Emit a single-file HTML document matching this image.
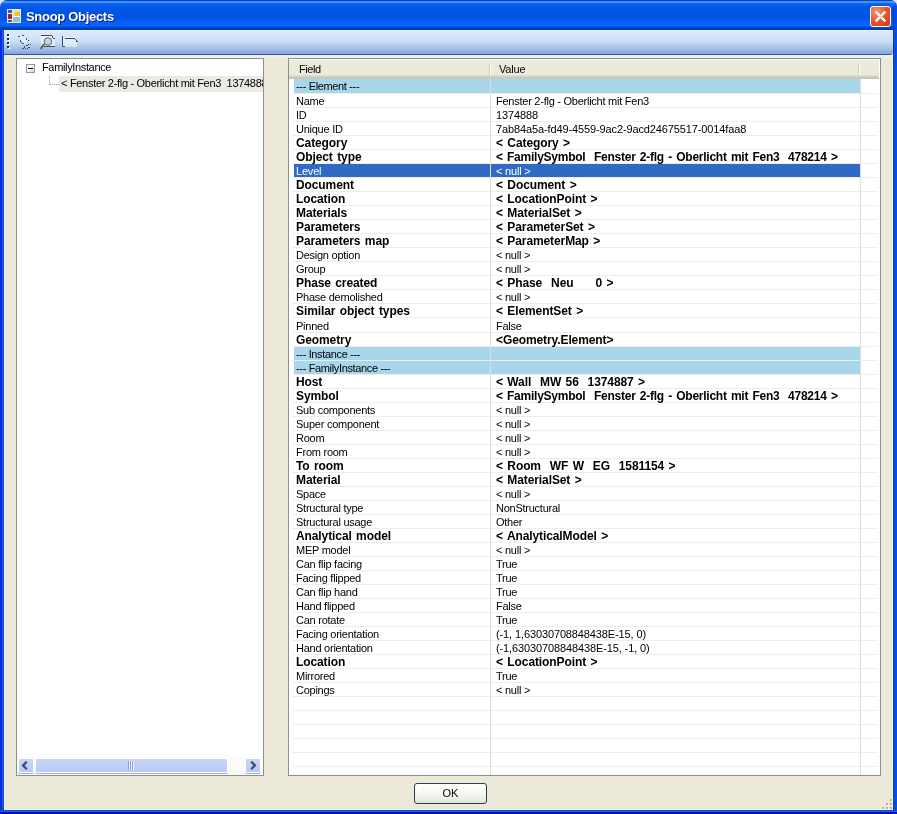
<!DOCTYPE html>
<html><head><meta charset="utf-8">
<style>
*{margin:0;padding:0;box-sizing:border-box}
html,body{width:897px;height:814px;overflow:hidden;background:#ECE9D8}
body{position:relative;-webkit-font-smoothing:antialiased;font-family:"Liberation Sans",sans-serif;font-size:11px;color:#000}
.a{position:absolute}
/* frame */
#title{left:0;top:0;width:897px;height:30px;border-radius:7px 6px 0 0;
 background:linear-gradient(to bottom,#0A3FD0 0px,#0A3FD0 1px,#3A92FF 1px,#3A92FF 3px,#1770F2 3px,#0862EC 4px,#0058E8 7px,#0054E3 12px,#0055E6 19px,#0A61FB 22px,#0C60F8 26px,#0050DA 27px,#0042C4 28px,#003AB2 30px)}
#lf{left:0;top:30px;width:4px;height:784px;background:linear-gradient(to right,#0A2ED4 0,#0A2ED4 2px,#1A5CF0 2px,#1A5CF0 3px,#0B4BD8 3px)}
#rf{left:893px;top:6px;width:4px;height:808px;background:linear-gradient(to right,#0D3CB8 0,#0D3CB8 1px,#0A4AE0 1px,#0A4AE0 3px,#0050F0 3px)}
#bf{left:0;top:810px;width:897px;height:4px;background:linear-gradient(to bottom,#0D4DC6 0,#0D4DC6 1px,#1F5FEA 1px,#1F5FEA 2px,#0010A0 2px)}
#hl{left:4px;top:55px;width:1px;height:755px;background:#F2F2FF}
#hr{left:892px;top:55px;width:1px;height:755px;background:#F2F8F8}
#hb{left:4px;top:809px;width:889px;height:1px;background:#E6FAFA}
#ttext{will-change:transform;left:26px;top:9px;font-weight:bold;font-size:13px;color:#fff;letter-spacing:-0.3px;text-shadow:1px 1px 0 #0A1E80;white-space:pre;line-height:16px}
#close{left:870px;top:6px;width:21px;height:21px;border:1px solid #fff;border-radius:3px;
 background:radial-gradient(circle at 30% 25%,#F29A7C 0,#E45A34 45%,#CC3A12 100%)}
/* toolbar */
#tb{left:4px;top:30px;width:889px;height:25px;
 background:linear-gradient(to bottom,#E3F5FF 0,#E3F5FF 1px,#DCE8FA 1px,#D8E6FA 6px,#C5DDF8 12px,#B0CCE6 16px,#A6C4E4 18px,#98B2EE 21px,#8FA5E0 23px,#8FA5E0 24px,#3B5577 24px,#3B5577 25px);
 border-radius:0 0 3px 0}
.dot{width:2px;height:2px;background:#1F2D50;box-shadow:1px 1px 0 #fff}
/* panels */
#tree{left:16px;top:58px;width:248px;height:718px;border:1px solid #8C8E96;background:#fff}
#grid{left:288px;top:58px;width:593px;height:718px;border:1px solid #8C8E96;background:#fff;overflow:hidden}
.t{white-space:pre;line-height:13px;will-change:transform}
/* grid */
#hdr{left:289px;top:59px;width:590px;height:20px;
 background:linear-gradient(to bottom,#FFFFFF 0,#FFFFFF 1px,#EBEADB 1px,#EBEADB 16px,#E2DECD 16px,#E2DECD 17px,#D6D2C2 17px,#D6D2C2 18px,#CBC7B8 18px,#CBC7B8 20px)}
.hdiv{top:63px;width:1px;height:12px;background:#CFCBBB;box-shadow:1px 0 0 #fff}
.gl{position:absolute;left:292px;width:586px;height:1px;background:#EDEDEA}
.vl{position:absolute;top:79px;width:1px;height:696px;background:#DEDEDA}
.row{position:absolute;will-change:transform;left:294px;width:566px;white-space:pre}
.row span{position:absolute;top:1px;line-height:13px}
.c1{left:2px}
.c2{left:202px}
.sec{background:#A8D6EA}
.sel{background:#316AC5;color:#fff}
.rr span{font-size:11px;letter-spacing:-0.25px}
.sec span{letter-spacing:-0.35px}
.sel span{letter-spacing:-0.2px}
.bb span{font-weight:bold;font-size:12px;letter-spacing:-0.1px;word-spacing:1.2px}
/* scrollbar */
#sb{left:17px;top:757px;width:246px;height:18px;background:#FBFCF8}
.sbtn{top:759px;width:16px;height:15px;border-radius:2px;border:1px solid #FFFFFF;
 background:linear-gradient(to bottom,#C8D6FB 0,#B7C8F5 100%)}
#thumb{left:35px;top:759px;width:192px;height:15px;border:1px solid #fff;border-radius:2px;
 background:linear-gradient(to right,#C4D4FC 0,#B8CBF8 100%);box-shadow:inset -1px -1px 0 #A8BCE8}
/* ok */
#ok{will-change:transform;left:414px;top:783px;width:73px;height:21px;border:1px solid #2A3E5C;border-radius:3px;
 background:linear-gradient(to bottom,#FFFFFF 0,#F4F4F0 60%,#E6E4D8 100%);text-align:center;line-height:18px}
.grip{width:2px;height:2px;background:#B3B1A4;box-shadow:1px 1px 0 #fff}
</style></head><body>
<div class="a" style="left:0;top:0;width:897px;height:8px;background:#E4E6F4"></div>
<div class="a" id="title"></div>
<!-- app icon -->
<div class="a" style="left:7px;top:9px;width:14px;height:14px;background:#F4F8FF;border:1px solid #E0E8FF"></div>
<div class="a" style="left:8px;top:10px;width:4px;height:3px;background:#2A6A9A"></div>
<div class="a" style="left:8px;top:14px;width:4px;height:5px;background:#B82020"></div>
<div class="a" style="left:13px;top:10px;width:7px;height:6px;background:#E8C030;box-shadow:inset 2px 2px 0 #F8E080"></div>
<div class="a" style="left:13px;top:17px;width:7px;height:5px;background:#90C0DC"></div>
<div class="a" style="left:8px;top:20px;width:4px;height:2px;background:#3060A8"></div>
<div class="a t" id="ttext">Snoop Objects</div>
<div class="a" id="close"><svg width="19" height="19" style="position:absolute;left:0;top:0"><path d="M5.5 5.5 L13.5 13.5 M13.5 5.5 L5.5 13.5" stroke="#FFF6EC" stroke-width="2.4" stroke-linecap="square"/></svg></div>
<div class="a" id="lf"></div><div class="a" id="rf"></div><div class="a" id="bf"></div>
<div class="a" id="hl"></div><div class="a" id="hr"></div><div class="a" id="hb"></div>
<!-- toolbar -->
<div class="a" id="tb"></div>
<div class="a dot" style="left:7px;top:34px"></div>
<div class="a dot" style="left:7px;top:38px"></div>
<div class="a dot" style="left:7px;top:42px"></div>
<div class="a dot" style="left:7px;top:46px"></div>
<svg class="a" style="left:15px;top:33px" width="20" height="20"><path d="M4 4 L8 3 L13 8 L9 12 Z" fill="#F4F8FF" opacity="0.6"/><g fill="#3E4E6C"><rect x="3" y="3" width="1" height="1"/><rect x="4" y="3" width="1" height="1"/><rect x="7" y="2" width="1" height="1"/><rect x="8" y="2" width="1" height="1"/><rect x="11" y="5" width="1" height="1"/><rect x="11" y="6" width="1" height="1"/><rect x="13" y="7" width="1" height="1"/><rect x="5" y="7" width="1" height="1"/><rect x="5" y="8" width="1" height="1"/><rect x="6" y="9" width="1" height="1"/><rect x="7" y="10" width="1" height="1"/><rect x="8" y="10" width="1" height="1"/><rect x="13" y="11" width="1" height="1"/><rect x="15" y="11" width="1" height="1"/><rect x="11" y="12" width="1" height="1"/><rect x="12" y="12" width="1" height="1"/><rect x="9" y="13" width="1" height="1"/><rect x="9" y="14" width="1" height="1"/><rect x="13" y="14" width="1" height="1"/><rect x="14" y="14" width="1" height="1"/><rect x="7" y="15" width="1" height="1"/><rect x="8" y="15" width="1" height="1"/><rect x="10" y="15" width="1" height="1"/><rect x="12" y="15" width="1" height="1"/></g></svg>
<svg class="a" style="left:38px;top:33px" width="20" height="20">
 <path d="M3 3 H14 L17 6 V14 H3 Z" fill="#F2F6FC" opacity="0.7"/>
 <path d="M3 2.5 H14 M14.5 3 V5 M15 5.5 H17" stroke="#3E4A5E" stroke-width="1" fill="none"/>
 <path d="M6 13.5 H17" stroke="#3E4A5E" stroke-width="1" fill="none"/>
 <circle cx="9.9" cy="8.5" r="3.8" fill="#C8D2DA" stroke="#5A6878" stroke-width="1"/>
 <path d="M6.2 11.2 L2.6 15.8" stroke="#56684A" stroke-width="2"/>
</svg>
<svg class="a" style="left:60px;top:33px" width="20" height="20">
 <path d="M3 4 H15 L17 8 V14 H3 Z" fill="#F2F6FC" opacity="0.6"/>
 <path d="M2.5 3 V13.5 H5" stroke="#3E4A5E" stroke-width="1" fill="none"/>
 <path d="M5 5.5 H15" stroke="#3E4A5E" stroke-width="1" fill="none"/>
 <g fill="#3E4A5E"><rect x="15" y="6" width="1" height="1"/><rect x="16" y="7" width="1" height="2"/><rect x="17" y="8" width="1" height="1"/></g>
</svg>
<div class="a" style="left:5px;top:55px;width:887px;height:3px;background:linear-gradient(to bottom,#DCF4FC 0,#E6F4F6 1px,#EEF0EA 2px,#EEEEE6 3px)"></div>
<!-- tree -->
<div class="a" id="tree"></div>
<div class="a" style="left:26px;top:64px;width:9px;height:9px;border:1px solid #8A9AA8;background:linear-gradient(135deg,#fff 30%,#D8D4C8 100%)"></div>
<div class="a" style="left:28px;top:68px;width:5px;height:1px;background:#000"></div>
<div class="a t" style="left:42px;top:61px;letter-spacing:-0.35px">FamilyInstance</div>
<div class="a" style="left:49px;top:76px;width:1px;height:9px;border-left:1px dotted #A0A0A0"></div>
<div class="a" style="left:50px;top:84px;width:9px;height:1px;border-top:1px dotted #A0A0A0"></div>
<div class="a" style="left:59px;top:76px;width:204px;height:16px;background:#EAE9E2"></div>
<div class="a t" style="left:61px;top:77px;width:202px;overflow:hidden;letter-spacing:-0.3px">&lt; Fenster 2-flg - Oberlicht mit Fen3  1374888 &gt;</div>
<div class="a" id="sb"></div>
<div class="a" style="left:18px;top:758px;width:16px;height:15px;background:#fff;border-radius:2px;box-shadow:0 1px 0 #9EB0D0"></div>
<div class="a" style="left:19px;top:759px;width:14px;height:13px;border-radius:1px;background:linear-gradient(to bottom,#CAD6F6,#B9C9F2)"><svg width="14" height="13" style="position:absolute;left:0;top:0"><path d="M7.8 2.6 L4 6.4 L7.8 10.2" stroke="#3D4E7A" stroke-width="2.2" fill="none"/></svg></div>
<div class="a" style="left:35px;top:758px;width:193px;height:15px;background:#fff;border-radius:2px;box-shadow:0 1px 0 #9EB0D0"></div>
<div class="a" style="left:36px;top:759px;width:191px;height:13px;border-radius:1px;background:linear-gradient(to bottom,#C9D6F8,#B9CAF8)"></div>
<div class="a" style="left:128px;top:761px;width:1px;height:9px;background:#8A9CD0;box-shadow:1px 0 0 #F4F8FF"></div>
<div class="a" style="left:130px;top:761px;width:1px;height:9px;background:#8A9CD0;box-shadow:1px 0 0 #F4F8FF"></div>
<div class="a" style="left:132px;top:762px;width:1px;height:8px;background:#8A9CD0;box-shadow:1px 0 0 #F4F8FF"></div>
<div class="a" style="left:245px;top:758px;width:16px;height:15px;background:#fff;border-radius:2px;box-shadow:0 1px 0 #9EB0D0"></div>
<div class="a" style="left:246px;top:759px;width:14px;height:13px;border-radius:1px;background:linear-gradient(to bottom,#CAD6F6,#B9C9F2)"><svg width="14" height="13" style="position:absolute;left:0;top:0"><path d="M5.2 2.6 L9 6.4 L5.2 10.2" stroke="#3D4E7A" stroke-width="2.2" fill="none"/></svg></div>
<!-- grid -->
<div class="a" id="grid"></div>
<div class="a" id="hdr"></div>
<div class="a hdiv" style="left:489px"></div>
<div class="a hdiv" style="left:858px"></div>
<div class="a t" style="left:299px;top:63px;letter-spacing:-0.45px">Field</div>
<div class="a t" style="left:499px;top:63px;letter-spacing:-0.2px">Value</div>
<div class="gl" style="top:93px"></div>
<div class="gl" style="top:107px"></div>
<div class="gl" style="top:121px"></div>
<div class="gl" style="top:135px"></div>
<div class="gl" style="top:149px"></div>
<div class="gl" style="top:163px"></div>
<div class="gl" style="top:177px"></div>
<div class="gl" style="top:191px"></div>
<div class="gl" style="top:205px"></div>
<div class="gl" style="top:219px"></div>
<div class="gl" style="top:233px"></div>
<div class="gl" style="top:247px"></div>
<div class="gl" style="top:261px"></div>
<div class="gl" style="top:275px"></div>
<div class="gl" style="top:289px"></div>
<div class="gl" style="top:303px"></div>
<div class="gl" style="top:317px"></div>
<div class="gl" style="top:332px"></div>
<div class="gl" style="top:346px"></div>
<div class="gl" style="top:360px"></div>
<div class="gl" style="top:374px"></div>
<div class="gl" style="top:388px"></div>
<div class="gl" style="top:402px"></div>
<div class="gl" style="top:416px"></div>
<div class="gl" style="top:430px"></div>
<div class="gl" style="top:444px"></div>
<div class="gl" style="top:458px"></div>
<div class="gl" style="top:472px"></div>
<div class="gl" style="top:486px"></div>
<div class="gl" style="top:500px"></div>
<div class="gl" style="top:514px"></div>
<div class="gl" style="top:528px"></div>
<div class="gl" style="top:542px"></div>
<div class="gl" style="top:556px"></div>
<div class="gl" style="top:570px"></div>
<div class="gl" style="top:584px"></div>
<div class="gl" style="top:598px"></div>
<div class="gl" style="top:612px"></div>
<div class="gl" style="top:626px"></div>
<div class="gl" style="top:640px"></div>
<div class="gl" style="top:654px"></div>
<div class="gl" style="top:668px"></div>
<div class="gl" style="top:682px"></div>
<div class="gl" style="top:696px"></div>
<div class="gl" style="top:710px"></div>
<div class="gl" style="top:724px"></div>
<div class="gl" style="top:738px"></div>
<div class="gl" style="top:752px"></div>
<div class="gl" style="top:766px"></div>
<div class="row sec" style="top:79px;height:14px"><span class="c1">--- Element ---</span><span class="c2"></span></div>
<div class="row rr" style="top:94px;height:13px"><span class="c1">Name</span><span class="c2">Fenster 2-flg - Oberlicht mit Fen3</span></div>
<div class="row rr" style="top:108px;height:13px"><span class="c1">ID</span><span class="c2" style="letter-spacing:-0.12px">1374888</span></div>
<div class="row rr" style="top:122px;height:13px"><span class="c1">Unique ID</span><span class="c2" style="letter-spacing:-0.12px">7ab84a5a-fd49-4559-9ac2-9acd24675517-0014faa8</span></div>
<div class="row bb" style="top:136px;height:13px"><span class="c1">Category</span><span class="c2">&lt; Category &gt;</span></div>
<div class="row bb" style="top:150px;height:13px"><span class="c1">Object type</span><span class="c2" style="letter-spacing:-0.25px">&lt; FamilySymbol  Fenster 2-flg - Oberlicht mit Fen3  478214 &gt;</span></div>
<div class="row sel" style="top:164px;height:13px"><span class="c1">Level</span><span class="c2">&lt; null &gt;</span></div>
<div class="row bb" style="top:178px;height:13px"><span class="c1">Document</span><span class="c2">&lt; Document &gt;</span></div>
<div class="row bb" style="top:192px;height:13px"><span class="c1">Location</span><span class="c2">&lt; LocationPoint &gt;</span></div>
<div class="row bb" style="top:206px;height:13px"><span class="c1">Materials</span><span class="c2">&lt; MaterialSet &gt;</span></div>
<div class="row bb" style="top:220px;height:13px"><span class="c1">Parameters</span><span class="c2">&lt; ParameterSet &gt;</span></div>
<div class="row bb" style="top:234px;height:13px"><span class="c1">Parameters map</span><span class="c2">&lt; ParameterMap &gt;</span></div>
<div class="row rr" style="top:248px;height:13px"><span class="c1">Design option</span><span class="c2">&lt; null &gt;</span></div>
<div class="row rr" style="top:262px;height:13px"><span class="c1">Group</span><span class="c2">&lt; null &gt;</span></div>
<div class="row bb" style="top:276px;height:13px"><span class="c1">Phase created</span><span class="c2">&lt; Phase  Neu     0 &gt;</span></div>
<div class="row rr" style="top:290px;height:13px"><span class="c1">Phase demolished</span><span class="c2">&lt; null &gt;</span></div>
<div class="row bb" style="top:304px;height:13px"><span class="c1">Similar object types</span><span class="c2">&lt; ElementSet &gt;</span></div>
<div class="row rr" style="top:319px;height:13px"><span class="c1">Pinned</span><span class="c2">False</span></div>
<div class="row bb" style="top:333px;height:13px"><span class="c1">Geometry</span><span class="c2">&lt;Geometry.Element&gt;</span></div>
<div class="row sec" style="top:347px;height:13px"><span class="c1">--- Instance ---</span><span class="c2"></span></div>
<div class="row sec" style="top:361px;height:13px"><span class="c1">--- FamilyInstance ---</span><span class="c2"></span></div>
<div class="row bb" style="top:375px;height:13px"><span class="c1">Host</span><span class="c2">&lt; Wall  MW 56  1374887 &gt;</span></div>
<div class="row bb" style="top:389px;height:13px"><span class="c1">Symbol</span><span class="c2" style="letter-spacing:-0.25px">&lt; FamilySymbol  Fenster 2-flg - Oberlicht mit Fen3  478214 &gt;</span></div>
<div class="row rr" style="top:403px;height:13px"><span class="c1">Sub components</span><span class="c2">&lt; null &gt;</span></div>
<div class="row rr" style="top:417px;height:13px"><span class="c1">Super component</span><span class="c2">&lt; null &gt;</span></div>
<div class="row rr" style="top:431px;height:13px"><span class="c1">Room</span><span class="c2">&lt; null &gt;</span></div>
<div class="row rr" style="top:445px;height:13px"><span class="c1">From room</span><span class="c2">&lt; null &gt;</span></div>
<div class="row bb" style="top:459px;height:13px"><span class="c1">To room</span><span class="c2">&lt; Room  WF W  EG  1581154 &gt;</span></div>
<div class="row bb" style="top:473px;height:13px"><span class="c1">Material</span><span class="c2">&lt; MaterialSet &gt;</span></div>
<div class="row rr" style="top:487px;height:13px"><span class="c1">Space</span><span class="c2">&lt; null &gt;</span></div>
<div class="row rr" style="top:501px;height:13px"><span class="c1">Structural type</span><span class="c2">NonStructural</span></div>
<div class="row rr" style="top:515px;height:13px"><span class="c1">Structural usage</span><span class="c2">Other</span></div>
<div class="row bb" style="top:529px;height:13px"><span class="c1">Analytical model</span><span class="c2">&lt; AnalyticalModel &gt;</span></div>
<div class="row rr" style="top:543px;height:13px"><span class="c1">MEP model</span><span class="c2">&lt; null &gt;</span></div>
<div class="row rr" style="top:557px;height:13px"><span class="c1">Can flip facing</span><span class="c2">True</span></div>
<div class="row rr" style="top:571px;height:13px"><span class="c1">Facing flipped</span><span class="c2">True</span></div>
<div class="row rr" style="top:585px;height:13px"><span class="c1">Can flip hand</span><span class="c2">True</span></div>
<div class="row rr" style="top:599px;height:13px"><span class="c1">Hand flipped</span><span class="c2">False</span></div>
<div class="row rr" style="top:613px;height:13px"><span class="c1">Can rotate</span><span class="c2">True</span></div>
<div class="row rr" style="top:627px;height:13px"><span class="c1">Facing orientation</span><span class="c2" style="letter-spacing:-0.12px">(-1, 1,63030708848438E-15, 0)</span></div>
<div class="row rr" style="top:641px;height:13px"><span class="c1">Hand orientation</span><span class="c2" style="letter-spacing:-0.12px">(-1,63030708848438E-15, -1, 0)</span></div>
<div class="row bb" style="top:655px;height:13px"><span class="c1">Location</span><span class="c2">&lt; LocationPoint &gt;</span></div>
<div class="row rr" style="top:669px;height:13px"><span class="c1">Mirrored</span><span class="c2">True</span></div>
<div class="row rr" style="top:683px;height:13px"><span class="c1">Copings</span><span class="c2">&lt; null &gt;</span></div>
<div class="vl" style="left:490px"></div>
<div class="vl" style="left:860px"></div>
<!-- ok -->
<div class="a" id="ok">OK</div>
<div class="a grip" style="left:890px;top:799px"></div>
<div class="a grip" style="left:886px;top:803px"></div>
<div class="a grip" style="left:890px;top:803px"></div>
<div class="a grip" style="left:882px;top:807px"></div>
<div class="a grip" style="left:886px;top:807px"></div>
<div class="a grip" style="left:890px;top:807px"></div>
</body></html>
